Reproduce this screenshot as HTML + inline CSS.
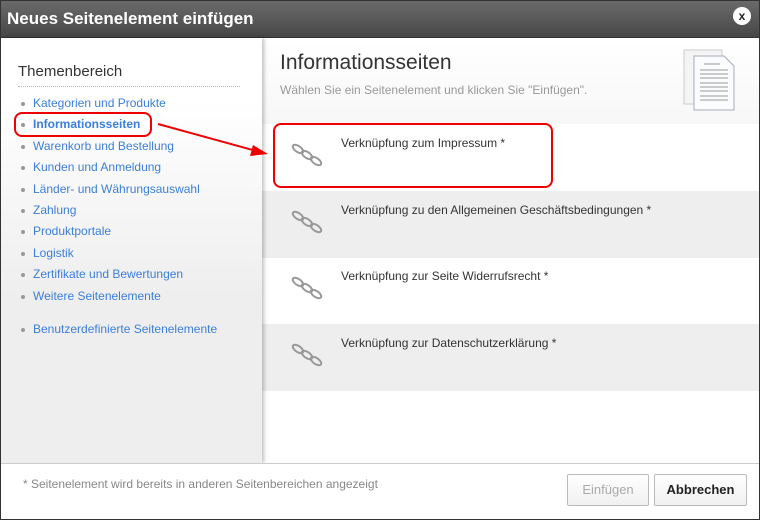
<!DOCTYPE html>
<html><head><meta charset="utf-8"><style>
*{margin:0;padding:0;box-sizing:border-box}
body{width:760px;height:520px;font-family:"Liberation Sans",sans-serif;background:#fff;position:relative;overflow:hidden}
.frame{position:absolute;left:0;top:0;width:760px;height:520px;border:1px solid #333}
.title{position:absolute;left:0;top:0;width:760px;height:38px;background:linear-gradient(#6a6a6a,#474747);border:1px solid #333}
.title span{position:absolute;left:6px;top:8px;color:#fff;font-weight:bold;font-size:17px}
.close{position:absolute;right:8px;top:6px;width:18px;height:18px;border-radius:50%;background:#fff;color:#222;font-weight:bold;font-size:12px;text-align:center;line-height:18px}
.side{position:absolute;left:1px;top:38px;width:261px;height:425px;background:linear-gradient(#fff 0,#fff 60px,#eee 260px,#eee);box-shadow:2px 0 4px rgba(0,0,0,.25)}
.side h3{position:absolute;left:17px;top:25px;font-weight:normal;font-size:15px;color:#333}
.side .dots{position:absolute;left:17px;top:48px;width:222px;border-top:1px dotted #bbb}
.side ul{position:absolute;left:17px;top:58px;list-style:none}
.side li{font-size:12px;color:#3b7fd8;height:21.4px;line-height:15px;padding-left:15px;position:relative}
.side li:before{content:"";position:absolute;left:3px;top:6px;width:4px;height:4px;border-radius:50%;background:#999}
.main{position:absolute;left:262px;top:38px;width:497px;height:425px;background:#fff}
.head{height:86px;background:linear-gradient(#fff,#f7f7f7)}
.head h2{position:absolute;left:18px;top:13px;font-weight:normal;font-size:21px;color:#333}
.head p{position:absolute;left:18px;top:45px;font-size:12px;color:#999}
.row{position:absolute;left:0;width:497px;height:67px}
.row span{position:absolute;left:79px;top:12px;font-size:12px;color:#333}
.g{background:#eeeeee}
.foot{position:absolute;left:1px;top:463px;width:758px;height:56px;border-top:1px solid #ccc;background:#fff}
.foot p{position:absolute;left:22px;top:13px;font-size:12px;color:#888}
.btn{position:absolute;top:10px;height:32px;border:1px solid #bbb;border-radius:2px;font-size:13px;text-align:center;line-height:30px;background:linear-gradient(#fff,#f0f0f0)}
.red{position:absolute;border:2px solid #e00;border-radius:8px}
</style></head><body>
<div class="title"><span>Neues Seitenelement einfügen</span><div class="close">x</div></div>
<div class="main">
<div class="head"><h2>Informationsseiten</h2><p>Wählen Sie ein Seitenelement und klicken Sie "Einfügen".</p>
<svg style="position:absolute;left:420px;top:8px" width="60" height="66"><rect x="2" y="4" width="38" height="54" fill="#f4f4f4" stroke="#ccc"/><path d="M12 10h30l10 10v44H12z" fill="#fafbfd" stroke="#aab"/><g stroke="#999" stroke-width="1"><path d="M22 18h16M18 24h28M18 28h28M18 32h28M18 37h28M18 41h28M18 45h28M18 50h28M18 54h28"/></g></svg></div>
<div class="row" style="top:86px"><span>Verknüpfung zum Impressum *</span></div>
<div class="row g" style="top:153px"><span>Verknüpfung zu den Allgemeinen Geschäftsbedingungen *</span></div>
<div class="row" style="top:219px"><span>Verknüpfung zur Seite Widerrufsrecht *</span></div>
<div class="row g" style="top:286px"><span>Verknüpfung zur Datenschutzerklärung *</span></div>
</div>
<div class="side"><h3>Themenbereich</h3><div class="dots"></div>
<ul><li>Kategorien und Produkte</li><li style="font-weight:bold">Informationsseiten</li><li>Warenkorb und Bestellung</li><li>Kunden und Anmeldung</li><li>Länder- und Währungsauswahl</li><li>Zahlung</li><li>Produktportale</li><li>Logistik</li><li>Zertifikate und Bewertungen</li><li>Weitere Seitenelemente</li><li style="margin-top:12px">Benutzerdefinierte Seitenelemente</li></ul></div>
<svg width="760" height="520" style="position:absolute;left:0;top:0">
<defs><g id="ch" fill="none" stroke="#999" stroke-width="2"><ellipse cx="5" cy="4" rx="6" ry="3" transform="rotate(35 5 4)"/><ellipse cx="14" cy="10" rx="6" ry="3" transform="rotate(35 14 10)"/><ellipse cx="23" cy="16" rx="6" ry="3" transform="rotate(35 23 16)"/></g></defs>
<use href="#ch" x="293" y="145"/><use href="#ch" x="293" y="212"/><use href="#ch" x="293" y="278"/><use href="#ch" x="293" y="345"/>
<path d="M158 124L260 152" stroke="#e00" stroke-width="2"/><path d="M268 154l-15 -9l-3 11z" fill="#e00"/>
</svg>
<div class="red" style="left:14px;top:112px;width:138px;height:25px"></div>
<div class="red" style="left:273px;top:123px;width:280px;height:65px"></div>
<div class="foot"><p>* Seitenelement wird bereits in anderen Seitenbereichen angezeigt</p>
<div class="btn" style="left:566px;width:82px;color:#aaa">Einfügen</div>
<div class="btn" style="left:653px;width:93px;color:#222;font-weight:bold">Abbrechen</div></div>
<div class="frame"></div>
</body></html>
